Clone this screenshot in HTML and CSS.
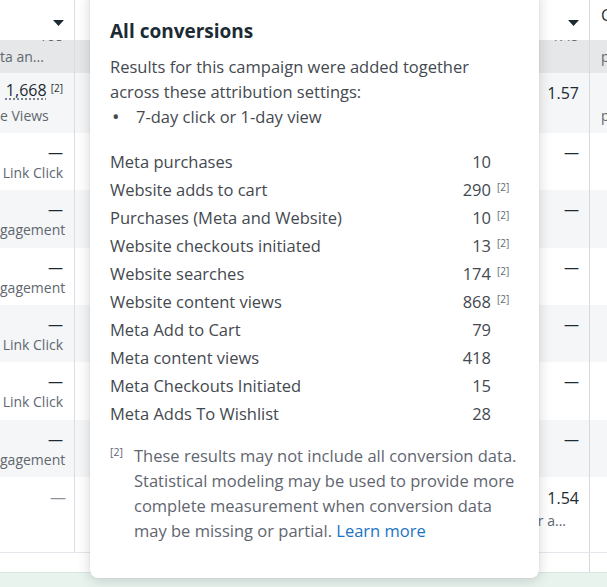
FILE: index.html
```html
<!DOCTYPE html>
<html lang="en">
<head>
<meta charset="utf-8">
<title>All conversions</title>
<link rel="stylesheet" href="styles.css">
</head>
<body>
<div class="page">
  <div class="grid">
    <div class="row head">
      <div class="c c1"><svg class="caret" viewBox="0 0 11 6" width="11" height="6"><polygon points="0,0 11,0 5.5,6"/></svg></div>
      <div class="c c2"></div>
      <div class="c c3"><svg class="caret" viewBox="0 0 11 6" width="11" height="6"><polygon points="0,0 11,0 5.5,6"/></svg></div>
      <div class="c c4"><span class="htext">C</span></div>
    </div>
    <div class="row band">
      <div class="c c1"><div class="cut">108</div><div class="sub trunc">ta an...</div></div>
      <div class="c c2"></div>
      <div class="c c3"><div class="cut">1.45</div></div>
      <div class="c c4"><div class="cut">&nbsp;</div><div class="sub">p</div></div>
    </div>
    <div class="row r1 grey">
      <div class="c c1"><div class="val"><span class="dotted">1,668</span> <sup class="sref">[2]</sup></div><div class="sub trunc3">e Views</div></div>
      <div class="c c2"></div>
      <div class="c c3"><div class="metric">1.57</div></div>
      <div class="c c4"><div class="val">&nbsp;</div><div class="sub">p</div></div>
    </div>
    <div class="row r57">
      <div class="c c1"><div class="dash">—</div><div class="sub">Link Click</div></div>
      <div class="c c2"></div>
      <div class="c c3"><div class="dash">—</div></div>
      <div class="c c4"></div>
    </div>
    <div class="row r58 grey">
      <div class="c c1"><div class="dash">—</div><div class="sub">gagement</div></div>
      <div class="c c2"></div>
      <div class="c c3"><div class="dash">—</div></div>
      <div class="c c4"></div>
    </div>
    <div class="row r57">
      <div class="c c1"><div class="dash">—</div><div class="sub">gagement</div></div>
      <div class="c c2"></div>
      <div class="c c3"><div class="dash">—</div></div>
      <div class="c c4"></div>
    </div>
    <div class="row r57 grey">
      <div class="c c1"><div class="dash">—</div><div class="sub">Link Click</div></div>
      <div class="c c2"></div>
      <div class="c c3"><div class="dash">—</div></div>
      <div class="c c4"></div>
    </div>
    <div class="row r58">
      <div class="c c1"><div class="dash">—</div><div class="sub">Link Click</div></div>
      <div class="c c2"></div>
      <div class="c c3"><div class="dash">—</div></div>
      <div class="c c4"></div>
    </div>
    <div class="row r57 grey">
      <div class="c c1"><div class="dash">—</div><div class="sub">gagement</div></div>
      <div class="c c2"></div>
      <div class="c c3"><div class="dash">—</div></div>
      <div class="c c4"></div>
    </div>
    <div class="row total">
      <div class="c c1"><div class="dash light">—</div></div>
      <div class="c c2"></div>
      <div class="c c3"><div class="metric">1.54</div><div class="sub trunc2">er a...</div></div>
      <div class="c c4"></div>
    </div>
    <div class="row foot">
      <div class="c c1"></div>
      <div class="c c2"></div>
      <div class="c c3"></div>
      <div class="c c4"></div>
    </div>
  </div>
  <div class="statusbar"></div>

  <div class="pop">
    <h2 class="title">All conversions</h2>
    <p class="desc">Results for this campaign were added together across these attribution settings:</p>
    <ul class="bullets"><li>7-day click or 1-day view</li></ul>
    <div class="list">
      <div class="item"><span class="lbl">Meta purchases</span><span class="num">10</span><span class="ref"></span></div>
      <div class="item"><span class="lbl">Website adds to cart</span><span class="num">290</span><span class="ref">[2]</span></div>
      <div class="item"><span class="lbl">Purchases (Meta and Website)</span><span class="num">10</span><span class="ref">[2]</span></div>
      <div class="item"><span class="lbl">Website checkouts initiated</span><span class="num">13</span><span class="ref">[2]</span></div>
      <div class="item"><span class="lbl">Website searches</span><span class="num">174</span><span class="ref">[2]</span></div>
      <div class="item"><span class="lbl">Website content views</span><span class="num">868</span><span class="ref">[2]</span></div>
      <div class="item"><span class="lbl">Meta Add to Cart</span><span class="num">79</span><span class="ref"></span></div>
      <div class="item"><span class="lbl">Meta content views</span><span class="num">418</span><span class="ref"></span></div>
      <div class="item"><span class="lbl">Meta Checkouts Initiated</span><span class="num">15</span><span class="ref"></span></div>
      <div class="item"><span class="lbl">Meta Adds To Wishlist</span><span class="num">28</span><span class="ref"></span></div>
    </div>
    <div class="note">
      <span class="nref">[2]</span>
      <p class="ntext">These results may not include all conversion data. Statistical modeling may be used to provide more complete measurement when conversion data may be missing or partial. <a class="link" href="#">Learn more</a></p>
    </div>
  </div>
</div>
</body>
</html>
```

FILE: styles.css
```css
* { box-sizing: border-box; }

html, body {
  margin: 0;
  padding: 0;
  background: #ffffff;
}

body {
  width: 607px;
  height: 587px;
  overflow: hidden;
  font-family: "Open Sans", "Noto Sans", sans-serif;
  color: #1c2b33;
}

.page {
  position: relative;
  width: 607px;
  height: 587px;
  overflow: hidden;
}

.grid {
  display: flex;
  flex-direction: column;
  width: 640px;
}

.row {
  display: flex;
}

.c {
  overflow: hidden;
  white-space: nowrap;
}

.c1 {
  width: 75px;
  border-right: 1px solid #dadde1;
  text-align: right;
  padding-right: 11px;
}

.c2 {
  width: 425px;
}

.c3 {
  width: 90px;
  border-right: 1px solid #d6d9dd;
  text-align: right;
  padding-right: 10px;
}

.c4 {
  flex: 1;
  padding-left: 11px;
}

.head {
  height: 40px;
  background: #ffffff;
}

.head .c {
  padding-top: 9px;
}

.caret {
  display: inline-block;
  fill: #1c2b33;
}

.head .c1 { padding-right: 10px; }
.head .c3 { padding-right: 10px; }

.htext {
  font-size: 16px;
  line-height: 20px;
  color: #1c2b33;
  position: relative;
  top: -5px;
}

.band {
  height: 33px;
  background: #e6e7e9;
}

.cut {
  font-size: 14px;
  line-height: 16px;
  margin-top: -12px;
  color: #606770;
}

.sub {
  font-size: 14px;
  line-height: 20px;
  color: #606770;
}

.band .sub {
  line-height: 18px;
  margin-top: 4px;
}

.trunc {
  padding-right: 23px;
}

.trunc2 {
  padding-right: 13px;
}

.trunc3 {
  padding-right: 17px;
}

.grey {
  background: #f5f6f7;
}

.r1 { height: 60px; }
.r57 { height: 57px; }
.r58 { height: 58px; }
.total { height: 75px; }

.r1 .c { padding-top: 6px; }
.r1 .val {
  font-size: 16px;
  line-height: 22px;
  color: #1c2b33;
}
.r1 .sub { margin-top: 4px; line-height: 22px; }

.metric {
  font-size: 16px;
  line-height: 22px;
  color: #1c2b33;
}

.r1 .metric { line-height: 28px; }

.dotted {
  text-decoration: underline dotted #606770;
  text-underline-offset: 3px;
}

.sref {
  font-size: 10px;
  vertical-align: top;
  position: relative;
  top: -2px;
}

.r57 .c, .r58 .c { padding-top: 9px; }

.dash {
  font-size: 15px;
  line-height: 20px;
  color: #1c2b33;
}

.r57 .sub, .r58 .sub { line-height: 22px; }

.total .c { padding-top: 10px; }
.total .c1 { padding-right: 8px; }
.total .dash.light { color: #8d949e; font-size: 16px; }
.total .sub { margin-top: 2px; }

.foot {
  height: 20px;
  border-top: 1px solid #e4e6eb;
}

.foot .c1 { border-right: none; }

.statusbar {
  height: 20px;
  background: #e8f3ee;
  border-top: 1px solid #d7e6df;
}

/* Popover */
.pop {
  position: absolute;
  left: 90px;
  top: -10px;
  width: 449px;
  background: #ffffff;
  border-radius: 8px;
  box-shadow: 0 2px 14px rgba(0, 0, 0, 0.16), 0 0 2px rgba(0, 0, 0, 0.1);
  padding: 29px 18px 35px 20px;
  color: #444950;
}

.title {
  margin: 0;
  font-size: 19px;
  line-height: 24px;
  font-weight: 700;
  color: #1c2b33;
}

.desc {
  margin: 11px 0 0 0;
  font-size: 16.5px;
  line-height: 25px;
  padding-right: 20px;
}

.bullets {
  list-style: none;
  margin: 0;
  padding: 0;
  font-size: 16.5px;
  line-height: 25px;
}

.bullets li {
  display: flex;
}

.bullets li::before {
  content: "•";
  width: 24px;
  padding-left: 2px;
  font-size: 20px;
}

.list {
  margin-top: 19px;
  display: flex;
  flex-direction: column;
}

.item {
  display: flex;
  height: 28px;
  align-items: center;
  font-size: 16.5px;
  line-height: 28px;
}

.lbl {
  flex: 1;
}

.num {
  text-align: right;
}

.ref {
  width: 30px;
  padding-left: 6px;
  font-size: 10px;
  line-height: 12px;
  align-self: flex-start;
  margin-top: 5px;
  color: #606770;
}

.note {
  display: flex;
  margin-top: 15px;
  color: #5f6670;
}

.nref {
  width: 24px;
  flex: none;
  font-size: 10.5px;
  line-height: 14px;
  margin-top: 2px;
}

.ntext {
  margin: 0;
  font-size: 16.5px;
  line-height: 25px;
}

.link {
  color: #1b74c4;
  text-decoration: none;
}
```
